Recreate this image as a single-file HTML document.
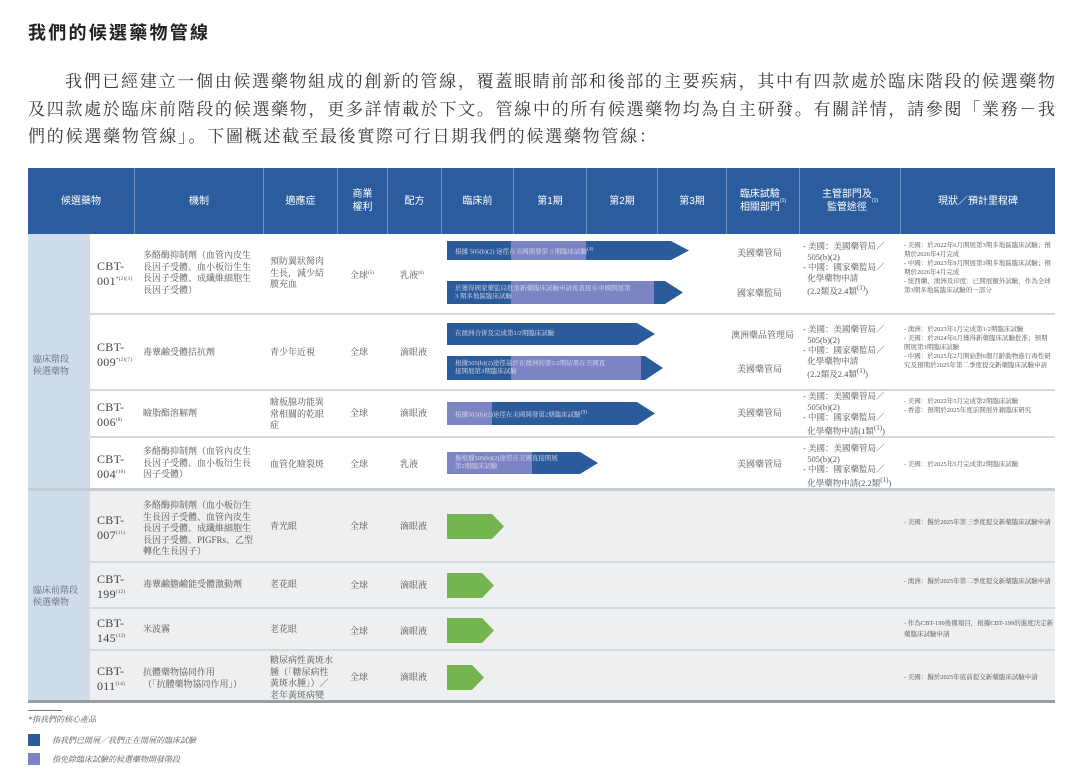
<!DOCTYPE html>
<html><head><meta charset="utf-8"><style>
*{margin:0;padding:0;box-sizing:border-box}
body{width:1080px;height:773px;background:#fff;position:relative;overflow:hidden;font-family:"Liberation Serif","Noto Serif CJK SC",serif;color:#444}
.a{position:absolute}
.title{left:28px;top:19px;width:180px;font:bold 18px "Liberation Sans","Noto Sans CJK TC",sans-serif;color:#222;text-align-last:justify;white-space:nowrap}
.p{position:absolute;font-size:17px;color:#3a3a3a;text-align-last:justify;white-space:nowrap;height:22px;line-height:22px}
.hd{position:absolute;top:168px;height:66px;background:#2b5c9e;border-right:1px solid #6f8fbf;color:#fff;font:10px "Liberation Sans","Noto Sans CJK TC",sans-serif;display:flex;align-items:center;justify-content:center;text-align:center;line-height:13px}
.t{position:absolute;font-size:9px;line-height:11.5px;color:#555}
.cbt{position:absolute;left:97px;font-size:12px;line-height:14px;color:#444;letter-spacing:.3px}
.cbt sup{font-size:5px}
.bar{position:absolute;background:#2c5b9c;clip-path:polygon(0 0,calc(100% - 18px) 0,100% 50%,calc(100% - 18px) 100%,0 100%)}
.pu{position:absolute;top:0;bottom:0;background:#7c84c4}
.bar span{position:absolute;left:8px;top:50%;transform:translateY(-50%);font-size:6.5px;line-height:8px;color:#dde;white-space:nowrap}
.g{position:absolute;background:#74b54f;clip-path:polygon(0 0,calc(100% - 12px) 0,100% 50%,calc(100% - 12px) 100%,0 100%)}
.ln{position:absolute;left:90px;width:965px;height:2px;background:#d5d8dc}
</style></head><body>
<div class="title a">我們的候選藥物管線</div>
<div class="p" style="left:65px;top:71px;width:990px">我們已經建立一個由候選藥物組成的創新的管線，覆蓋眼睛前部和後部的主要疾病，其中有四款處於臨床階段的候選藥物</div>
<div class="p" style="left:28px;top:99px;width:1027px">及四款處於臨床前階段的候選藥物，更多詳情載於下文。管線中的所有候選藥物均為自主研發。有關詳情，請參閱「業務－我</div>
<div class="p" style="left:28px;top:126px;width:628px">們的候選藥物管線」。下圖概述截至最後實際可行日期我們的候選藥物管線：</div>

<div class="hd" style="left:28px;width:107px">候選藥物</div>
<div class="hd" style="left:135px;width:129px">機制</div>
<div class="hd" style="left:264px;width:74px">適應症</div>
<div class="hd" style="left:338px;width:50px">商業<br>權利</div>
<div class="hd" style="left:388px;width:54px">配方</div>
<div class="hd" style="left:442px;width:72px">臨床前</div>
<div class="hd" style="left:514px;width:73px">第1期</div>
<div class="hd" style="left:587px;width:71px">第2期</div>
<div class="hd" style="left:658px;width:69px">第3期</div>
<div class="hd" style="left:727px;width:73px">臨床試驗<br>相關部門<sup style="font-size:5px">(1)</sup></div>
<div class="hd" style="left:800px;width:101px">主管部門及<br>監管途徑<sup style="font-size:5px">(1)</sup></div>
<div class="hd" style="left:901px;width:154px;border-right:none">現狀／預計里程碑</div>

<div class="a" style="left:28px;top:234px;width:62px;height:468px;background:#cfdcea"></div>
<div class="a" style="left:90px;top:490px;width:965px;height:212px;background:#eeeff1"></div>
<div class="a" style="left:28px;top:488px;width:1027px;height:3px;background:#c8cbd0"></div>
<div class="a" style="left:28px;top:700px;width:1027px;height:3px;background:#9a9da2"></div>
<div class="ln" style="top:313px"></div>
<div class="ln" style="top:389px"></div>
<div class="ln" style="top:436px"></div>
<div class="ln" style="top:561px"></div>
<div class="ln" style="top:607px"></div>
<div class="ln" style="top:649px"></div>

<div class="t" style="left:33px;top:354px;font-size:9px;color:#667">臨床階段<br>候選藥物</div>
<div class="t" style="left:33px;top:585px;font-size:9px;color:#667">臨床前階段<br>候選藥物</div>

<div class="cbt" style="top:259px">CBT-<br>001<sup>*(2)(3)</sup></div>
<div class="t" style="left:143px;top:250px;width:116px">多酪酶抑制劑（血管內皮生長因子受體、血小板衍生生長因子受體、成纖維細胞生長因子受體）</div>
<div class="t" style="left:270px;top:256px;width:62px">預防翼狀胬肉生長，減少結膜充血</div>
<div class="t" style="left:350px;top:268px">全球<sup style="font-size:5px">(5)</sup></div>
<div class="t" style="left:400px;top:268px">乳液<sup style="font-size:5px">(6)</sup></div>
<div class="bar" style="left:447px;top:241px;width:242px;height:19px"><div class="pu" style="left:64px;width:75px"></div><span>根據 505(b)(2) 途徑在美國開發第 3 期臨床試驗<sup>(4)</sup></span></div>
<div class="bar" style="left:447px;top:281px;width:236px;height:23px"><div class="pu" style="left:64px;width:143px"></div><span>於獲得國家藥監局批准新藥臨床試驗申請後直接在中國開展第<br>3 期多地區臨床試驗</span></div>
<div class="t" style="left:737px;top:248px">美國藥管局</div>
<div class="t" style="left:737px;top:288px">國家藥監局</div>
<div class="t" style="left:803px;top:241px;width:95px;font-size:8.5px;line-height:10.5px">- 美國：美國藥管局／<br>&nbsp;&nbsp;505(b)(2)<br>- 中國：國家藥監局／<br>&nbsp;&nbsp;化學藥物申請<br>&nbsp;&nbsp;(2.2類及2.4類<sup>(1)</sup>)</div>
<div class="t" style="left:904px;top:241px;width:150px;font-size:6.5px;line-height:9px">- 美國：於2022年6月開展第3期多地區臨床試驗；預期於2026年4月完成<br>- 中國：於2023年9月開展第3期多地區臨床試驗；預期於2026年4月完成<br>- 紐西蘭、澳洲及印度：已開展額外試驗，作為全球第3期多地區臨床試驗的一部分</div>

<div class="cbt" style="top:340px">CBT-<br>009<sup>*(2)(7)</sup></div>
<div class="t" style="left:143px;top:347px">毒蕈鹼受體拮抗劑</div>
<div class="t" style="left:270px;top:347px">青少年近視</div>
<div class="t" style="left:350px;top:347px">全球</div>
<div class="t" style="left:400px;top:347px">滴眼液</div>
<div class="bar" style="left:447px;top:323px;width:208px;height:22px"><span>在澳洲合併及完成第1/2期臨床試驗</span></div>
<div class="bar" style="left:447px;top:356px;width:216px;height:24px"><div class="pu" style="left:64px;width:130px"></div><span>根據505(b)(2)途徑基於在澳洲的第1/2期結果在美國直<br>接開展第3期臨床試驗</span></div>
<div class="t" style="left:731px;top:330px">澳洲藥品管理局</div>
<div class="t" style="left:737px;top:364px">美國藥管局</div>
<div class="t" style="left:803px;top:324px;width:95px;font-size:8.5px;line-height:10.5px">- 美國：美國藥管局／<br>&nbsp;&nbsp;505(b)(2)<br>- 中國：國家藥監局／<br>&nbsp;&nbsp;化學藥物申請<br>&nbsp;&nbsp;(2.2類及2.4類<sup>(1)</sup>)</div>
<div class="t" style="left:904px;top:325px;width:150px;font-size:6.5px;line-height:9px">- 澳洲：於2023年1月完成第1/2期臨床試驗<br>- 美國：於2024年6月獲得新藥臨床試驗批准；預期開展第3期臨床試驗<br>- 中國：於2025年2月開始對6個月齡動物進行毒性研究及預期於2025年第二季度提交新藥臨床試驗申請</div>

<div class="cbt" style="top:400px">CBT-<br>006<sup>(8)</sup></div>
<div class="t" style="left:143px;top:408px">瞼脂酯溶解劑</div>
<div class="t" style="left:270px;top:397px;width:62px">瞼板腺功能異常相關的乾眼症</div>
<div class="t" style="left:350px;top:408px">全球</div>
<div class="t" style="left:400px;top:408px">滴眼液</div>
<div class="bar" style="left:447px;top:402px;width:208px;height:23px"><div class="pu" style="left:0;width:45px"></div><span>根據505(b)(2)途徑在美國開發第2期臨床試驗<sup>(9)</sup></span></div>
<div class="t" style="left:737px;top:408px">美國藥管局</div>
<div class="t" style="left:803px;top:391px;width:95px;font-size:8.5px;line-height:10.5px">- 美國：美國藥管局／<br>&nbsp;&nbsp;505(b)(2)<br>- 中國：國家藥監局／<br>&nbsp;&nbsp;化學藥物申請(1類<sup>(1)</sup>)</div>
<div class="t" style="left:904px;top:397px;width:150px;font-size:6.5px;line-height:9px">- 美國：於2022年5月完成第2期臨床試驗<br>- 香港：預期於2025年度前開展外籍臨床研究</div>

<div class="cbt" style="top:452px">CBT-<br>004<sup>(10)</sup></div>
<div class="t" style="left:143px;top:446px;width:112px">多酪酶抑制劑（血管內皮生長因子受體、血小板衍生長因子受體）</div>
<div class="t" style="left:270px;top:459px">血管化瞼裂斑</div>
<div class="t" style="left:350px;top:459px">全球</div>
<div class="t" style="left:400px;top:459px">乳液</div>
<div class="bar" style="left:447px;top:452px;width:151px;height:22px"><div class="pu" style="left:0;width:85px"></div><span>擬根據505(b)(2)途徑在美國直接開展<br>第2期臨床試驗</span></div>
<div class="t" style="left:737px;top:459px">美國藥管局</div>
<div class="t" style="left:803px;top:443px;width:95px;font-size:8.5px;line-height:10.5px">- 美國：美國藥管局／<br>&nbsp;&nbsp;505(b)(2)<br>- 中國：國家藥監局／<br>&nbsp;&nbsp;化學藥物申請(2.2類<sup>(1)</sup>)</div>
<div class="t" style="left:904px;top:459px;font-size:6.5px">- 美國：於2025年5月完成第2期臨床試驗</div>

<div class="cbt" style="top:513px">CBT-<br>007<sup>(11)</sup></div>
<div class="t" style="left:143px;top:500px;width:112px">多酪酶抑制劑（血小板衍生生長因子受體、血管內皮生長因子受體、成纖維細胞生長因子受體、PIGFRs、乙型轉化生長因子）</div>
<div class="t" style="left:270px;top:521px">青光眼</div>
<div class="t" style="left:350px;top:521px">全球</div>
<div class="t" style="left:400px;top:521px">滴眼液</div>
<div class="g" style="left:447px;top:514px;width:57px;height:25px"></div>
<div class="t" style="left:904px;top:517px;width:150px;font-size:6.5px;line-height:11px">- 美國：擬於2025年第三季度提交新藥臨床試驗申請</div>

<div class="cbt" style="top:572px">CBT-<br>199<sup>(12)</sup></div>
<div class="t" style="left:143px;top:579px">毒蕈鹼膽鹼能受體激動劑</div>
<div class="t" style="left:270px;top:579px">老花眼</div>
<div class="t" style="left:350px;top:580px">全球</div>
<div class="t" style="left:400px;top:580px">滴眼液</div>
<div class="g" style="left:447px;top:573px;width:47px;height:25px"></div>
<div class="t" style="left:904px;top:576px;width:150px;font-size:6.5px;line-height:11px">- 澳洲：擬於2025年第二季度提交新藥臨床試驗申請</div>

<div class="cbt" style="top:616px">CBT-<br>145<sup>(13)</sup></div>
<div class="t" style="left:143px;top:624px">米波霧</div>
<div class="t" style="left:270px;top:624px">老花眼</div>
<div class="t" style="left:350px;top:626px">全球</div>
<div class="t" style="left:400px;top:626px">滴眼液</div>
<div class="g" style="left:447px;top:618px;width:47px;height:25px"></div>
<div class="t" style="left:904px;top:618px;width:150px;font-size:6.5px;line-height:11px">- 作為CBT-199後備項目，根據CBT-199的進度決定新藥臨床試驗申請</div>

<div class="cbt" style="top:664px">CBT-<br>011<sup>(14)</sup></div>
<div class="t" style="left:143px;top:667px;width:120px">抗體藥物協同作用<br>（「抗體藥物協同作用」）</div>
<div class="t" style="left:270px;top:655px;width:66px">糖尿病性黃斑水腫（「糖尿病性黃斑水腫」）／老年黃斑病變</div>
<div class="t" style="left:350px;top:672px">全球</div>
<div class="t" style="left:400px;top:672px">滴眼液</div>
<div class="g" style="left:447px;top:665px;width:37px;height:25px"></div>
<div class="t" style="left:904px;top:672px;font-size:6.5px">- 美國：擬於2025年底前提交新藥臨床試驗申請</div>

<div class="a" style="left:28px;top:710px;width:34px;height:1px;background:#777"></div>
<div class="t" style="left:28px;top:714px;font-size:8px;font-style:italic">*指我們的核心產品</div>
<div class="a" style="left:28px;top:734px;width:12px;height:12px;background:#2c5b9c"></div>
<div class="t" style="left:52px;top:735px;font-size:8px;font-style:italic">指我們已開展／我們正在開展的臨床試驗</div>
<div class="a" style="left:28px;top:753px;width:12px;height:12px;background:#7c84c4"></div>
<div class="t" style="left:52px;top:754px;font-size:8px;font-style:italic">指免除臨床試驗的候選藥物開發階段</div>
</body></html>
